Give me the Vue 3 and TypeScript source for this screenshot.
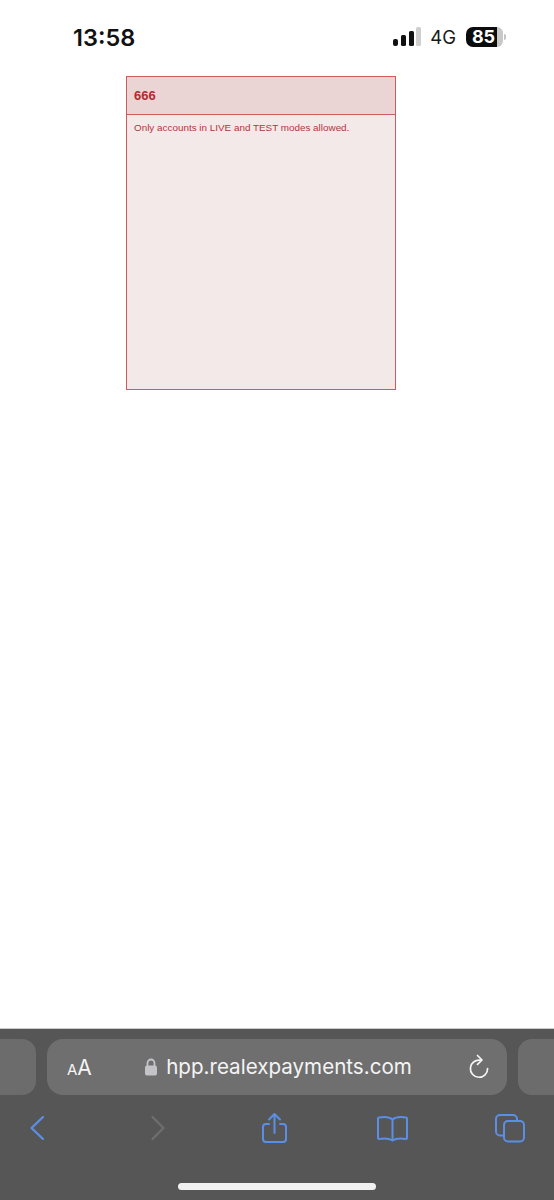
<script setup lang="ts">
const message = 'Only accounts in LIVE and TEST modes allowed.'
</script>

<template>
  <div class="page">
    <header class="status">
      <span class="time">13:58</span>
      <div class="status-right">
        <svg class="signal" width="28" height="20" viewBox="0 0 28 20">
          <rect x="0" y="12" width="5" height="7" rx="2" fill="#111" />
          <rect x="8" y="8" width="5" height="11" rx="1.5" fill="#111" />
          <rect x="16" y="4" width="5" height="15" rx="1.5" fill="#111" />
          <rect x="23" y="0" width="5" height="19" rx="1.5" fill="#cfcfcf" />
        </svg>
        <span class="net">4G</span>
        <div class="battery">
          <span class="battery-body">85</span>
          <span class="battery-rest"></span>
          <span class="battery-cap"></span>
        </div>
      </div>
    </header>

    <main class="content">
      <section class="error-box">
        <div class="error-head">666</div>
        <p class="error-body">{{ message }}</p>
      </section>
    </main>

    <footer class="browser">
      <div class="url-row">
        <div class="side-tab side-left"></div>
        <div class="url-bar">
          <span class="aa"><small>A</small>A</span>
          <div class="address">
            <svg width="14" height="18" viewBox="0 0 14 18">
              <path d="M3.500 8V5a3.500 3.500 0 0 1 7 0v3" fill="none" stroke="#c4c4c8" stroke-width="1.800" />
              <rect x="1" y="7.500" width="12" height="10" rx="2" fill="#c4c4c8" />
            </svg>
            <span class="host">hpp.realexpayments.com</span>
          </div>
          <svg class="reload" width="22" height="26" viewBox="0 0 22 26">
            <path d="M12.500 6.200A8.600 8.600 0 1 0 19.600 14.500" fill="none" stroke="#f4f4f4" stroke-width="1.700" stroke-linecap="round" />
            <path d="M9.500 1.500L14 6l-4.500 4.300" fill="none" stroke="#f4f4f4" stroke-width="1.700" stroke-linecap="round" stroke-linejoin="round" />
          </svg>
        </div>
        <div class="side-tab side-right"></div>
      </div>

      <nav class="tools">
        <svg width="30" height="32" viewBox="0 0 30 32">
          <path d="M20 5L8.500 16 20 27" fill="none" stroke="#5b8fe6" stroke-width="2.300" stroke-linecap="round" stroke-linejoin="round" />
        </svg>
        <svg width="30" height="32" viewBox="0 0 30 32">
          <path d="M12.500 5L23.500 16 12.500 27" fill="none" stroke="#6e6e6e" stroke-width="2.300" stroke-linecap="round" stroke-linejoin="round" />
        </svg>
        <svg width="30" height="32" viewBox="0 0 30 32">
          <path d="M12 12H9a3 3 0 0 0-3 3v12a3 3 0 0 0 3 3h17a3 3 0 0 0 3-3V15a3 3 0 0 0-3-3h-3" fill="none" stroke="#5b8fe6" stroke-width="2" stroke-linecap="round" />
          <path d="M17.500 21V2.500M12 7.500l5.500-5.500L23 7.500" fill="none" stroke="#5b8fe6" stroke-width="2" stroke-linecap="round" stroke-linejoin="round" />
        </svg>
        <svg width="34" height="32" viewBox="0 0 34 32">
          <path d="M18.500 7.500C15.500 5 10.500 4.500 5 5.500a1 1 0 0 0-1 1V26a1 1 0 0 0 1 1C10.500 26 15.500 26.500 18.500 28.500c3-2 8-2.500 13.500-1.500a1 1 0 0 0 1-1V6.500a1 1 0 0 0-1-1C26.500 4.500 21.500 5 18.500 7.500zM18.500 7.500V28.500" fill="none" stroke="#5b8fe6" stroke-width="2" stroke-linejoin="round" />
        </svg>
        <svg width="31" height="32" viewBox="0 0 31 32">
          <rect x="9" y="9" width="20" height="20.500" rx="4" fill="none" stroke="#5b8fe6" stroke-width="2" />
          <path d="M9 23.500H5a4 4 0 0 1-4-4V7a4 4 0 0 1 4-4h13a4 4 0 0 1 4 4v2" fill="none" stroke="#5b8fe6" stroke-width="2" />
        </svg>
      </nav>

      <div class="home-indicator"></div>
    </footer>
  </div>
</template>

<style>
html,
body {
  margin: 0;
  background: #ffffff;
}
</style>

<style scoped>
.page {
  width: 554px;
  height: 1200px;
  display: flex;
  flex-direction: column;
  overflow: hidden;
  background: #fff;
  font-family: Inter, "Liberation Sans", sans-serif;
}

.status {
  height: 76px;
  flex: none;
  box-sizing: border-box;
  padding: 23px 48px 0 73px;
  display: flex;
  justify-content: space-between;
  align-items: flex-start;
}

.time {
  font-size: 23.500px;
  line-height: 29px;
  font-weight: 600;
  color: #111;
}

.status-right {
  display: flex;
  align-items: center;
  height: 28px;
}

.signal {
  margin-right: 9px;
}

.net {
  font-size: 18.500px;
  color: #1a1a1a;
  margin-right: 10px;
}

.battery {
  display: flex;
  align-items: center;
}

.battery-body {
  width: 27px;
  height: 20px;
  background: #0c0c0c;
  color: #fff;
  border-radius: 7px 0 0 7px;
  font-size: 18px;
  font-weight: 700;
  line-height: 20px;
  text-align: center;
  padding-left: 4px;
}

.battery-rest {
  width: 6px;
  height: 20px;
  background: #c8c8c8;
  border-radius: 0 6px 6px 0;
}

.battery-cap {
  width: 2px;
  height: 6px;
  margin-left: 1px;
  background: #c4c4c4;
  border-radius: 0 2px 2px 0;
}

.content {
  flex: 1;
  padding-left: 126px;
}

.error-box {
  width: 270px;
  height: 314px;
  box-sizing: border-box;
  border: 1px solid #cc5c60;
  background: #f3e9e9;
  font-family: "Liberation Sans", Arial, sans-serif;
  color: #b52a2f;
}

.error-head {
  height: 38px;
  box-sizing: border-box;
  padding: 0 7px;
  display: flex;
  align-items: center;
  background: #ebd4d4;
  border-bottom: 1px solid #cc5c60;
  font-size: 13px;
  font-weight: 700;
}

.error-body {
  margin: 0;
  padding: 6px 7px 0;
  font-size: 9.900px;
  line-height: 14px;
  color: #b3353b;
}

.browser {
  height: 172px;
  flex: none;
  position: relative;
  background: #565656;
  border-top: 1px solid #c9c9c9;
  box-sizing: border-box;
}

.url-row {
  display: flex;
  gap: 11px;
  padding-top: 10px;
  margin-left: -14px;
  width: 582px;
}

.side-tab {
  width: 50px;
  height: 56px;
  flex: none;
  background: #6c6c6c;
  border-radius: 14px;
}

.url-bar {
  width: 460px;
  height: 56px;
  flex: none;
  box-sizing: border-box;
  background: #6f6f6f;
  border-radius: 16px;
  padding: 0 17px 0 20px;
  display: flex;
  align-items: center;
  color: #f4f4f4;
}

.aa {
  font-size: 21px;
  line-height: 1;
  width: 26px;
}

.aa small {
  font-size: 15px;
}

.address {
  flex: 1;
  display: flex;
  align-items: center;
  justify-content: center;
  gap: 8px;
  padding-right: 5px;
}

.host {
  font-size: 20.600px;
  line-height: 28px;
}

.tools {
  height: 66px;
  box-sizing: border-box;
  padding: 0 28px 0 23px;
  display: flex;
  justify-content: space-between;
  align-items: center;
}

.home-indicator {
  position: absolute;
  left: 178px;
  top: 154px;
  width: 198px;
  height: 7px;
  border-radius: 4px;
  background: #f1f1f1;
}
</style>
